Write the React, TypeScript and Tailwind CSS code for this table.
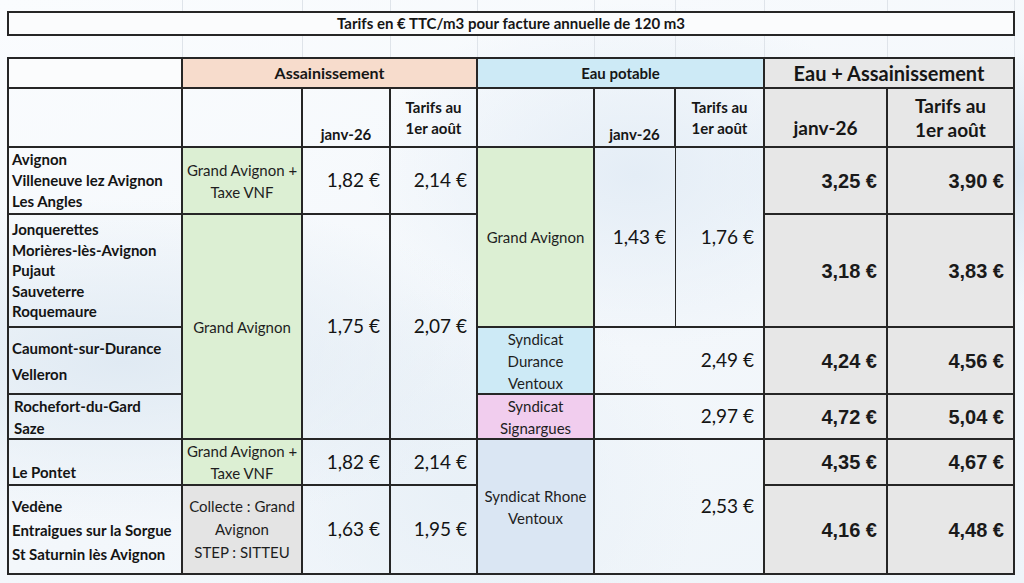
import React from "react";

const B = "border-r-2 border-b-2 border-[#262626]";

function C({ className = "", children }: { className?: string; children?: React.ReactNode }) {
  return <div className={`${B} flex ${className}`}>{children}</div>;
}

function Faint({ h }: { h: string }) {
  const cols = [0, 1, 2, 3, 4, 5, 6, 7, 8];
  return (
    <div className={`ml-[7px] w-[1008px] grid grid-cols-[176px_120px_88px_87px_117px_81px_89px_123px_127px] ${h}`}>
      {cols.map((i) => (
        <div key={i} className="border-r border-[#dfe4ea]" />
      ))}
    </div>
  );
}

const green = "bg-[#dcefd3]";
const val = "items-center justify-end pr-[9px] text-[19px] text-[#141414]";
const tot = "items-center justify-end pr-[9px] bg-[#e7e7e7] font-['Liberation_Sans',Arial,sans-serif] font-bold text-[20px] text-[#1a1a1a]";
const nameCell = "flex-col justify-center pl-[3px] font-bold text-[15px] text-[#141414]";
const org = "flex-col items-center justify-center text-center text-[15px] leading-[22px] text-[#1e1e1e]";

export default function App() {
  return (
    <div className="w-[1024px] h-[583px] overflow-hidden font-['Lato',sans-serif] bg-[radial-gradient(ellipse_at_12%_62%,#e0eaf3_0%,transparent_32%),radial-gradient(ellipse_at_62%_30%,#e4edf6_0%,transparent_30%),radial-gradient(ellipse_at_100%_30%,#d8e5f1_0%,transparent_22%),radial-gradient(ellipse_at_45%_85%,#e8f0f7_0%,transparent_30%),linear-gradient(160deg,#fafcfe_0%,#f3f7fb_60%,#eef4f9_100%)]">
      <Faint h="h-[11px]" />
      <div className="ml-[7px] w-[1008px] h-[25px] border-2 border-[#262626] bg-[#fbfcfd] flex items-center justify-center text-[15px] font-bold text-[#161616]">
        Tarifs en € TTC/m3 pour facture annuelle de 120 m3
      </div>
      <Faint h="h-[21px]" />
      <div className="ml-[7px] w-[1008px] border-l-2 border-t-2 border-[#262626] grid grid-cols-[174px_120px_88px_87px_117px_81px_89px_123px_127px] grid-rows-[30px_59px_67px_113px_67px_45px_46px_89px]">
        {/* Header row 1 */}
        <C className="bg-[#fbfcfd]" />
        <C className="col-span-3 bg-[#f7dccc] items-center justify-center font-bold text-[16px] text-[#161616]">Assainissement</C>
        <C className="col-span-3 bg-[#cdeaf6] items-center justify-center font-bold text-[15px] text-[#161616]">Eau potable</C>
        <C className="col-span-2 bg-[#e7e7e7] items-center justify-center font-bold text-[20px] text-[#161616]">Eau + Assainissement</C>

        {/* Header row 2 */}
        <C />
        <C />
        <C className="items-end justify-center pb-[1px] font-bold text-[15px] text-[#161616]">janv-26</C>
        <C className="flex-col items-center justify-center text-center font-bold text-[15px] leading-[21px] text-[#161616]">
          <span>Tarifs au</span>
          <span>1er août</span>
        </C>
        <C />
        <C className="items-end justify-center pb-[1px] font-bold text-[15px] text-[#161616]">janv-26</C>
        <C className="flex-col items-center justify-center text-center font-bold text-[15px] leading-[21px] text-[#161616]">
          <span>Tarifs au</span>
          <span>1er août</span>
        </C>
        <C className="bg-[#e7e7e7] items-end justify-center pb-[4px] font-bold text-[19px] text-[#161616]">janv-26</C>
        <C className="bg-[#e7e7e7] flex-col items-center justify-center text-center font-bold text-[19px] leading-[24px] text-[#161616]">
          <span>Tarifs au</span>
          <span>1er août</span>
        </C>

        {/* R1 */}
        <C className={`${nameCell} leading-[21px]`}>
          <span>Avignon</span>
          <span>Villeneuve lez Avignon</span>
          <span>Les Angles</span>
        </C>
        <C className={`${org} ${green}`}>
          <span>Grand Avignon +</span>
          <span>Taxe VNF</span>
        </C>
        <C className={val}>1,82 €</C>
        <C className={val}>2,14 €</C>
        <C className={`${org} ${green} row-span-2`}>Grand Avignon</C>
        <div className={`row-span-2 flex border-r border-b-2 border-[#262626] ${val}`}>1,43 €</div>
        <C className={`row-span-2 ${val}`}>1,76 €</C>
        <C className={tot}>3,25 €</C>
        <C className={tot}>3,90 €</C>

        {/* R2 */}
        <C className={`${nameCell} leading-[20.5px]`}>
          <span>Jonquerettes</span>
          <span>Morières-lès-Avignon</span>
          <span>Pujaut</span>
          <span>Sauveterre</span>
          <span>Roquemaure</span>
        </C>
        <C className={`${org} ${green} row-span-3`}>Grand Avignon</C>
        <C className={`row-span-3 ${val}`}>1,75 €</C>
        <C className={`row-span-3 ${val}`}>2,07 €</C>
        <C className={tot}>3,18 €</C>
        <C className={tot}>3,83 €</C>

        {/* R3 */}
        <C className={`${nameCell} leading-[26px]`}>
          <span>Caumont-sur-Durance</span>
          <span>Velleron</span>
        </C>
        <C className={`${org} bg-[#cdeaf6] leading-[21.5px]`}>
          <span>Syndicat</span>
          <span>Durance</span>
          <span>Ventoux</span>
        </C>
        <C className={`col-span-2 ${val}`}>2,49 €</C>
        <C className={tot}>4,24 €</C>
        <C className={tot}>4,56 €</C>

        {/* R4 */}
        <C className={`${nameCell} leading-[22px] pl-[5px]`}>
          <span>Rochefort-du-Gard</span>
          <span>Saze</span>
        </C>
        <C className={`${org} bg-[#f1cdee]`}>
          <span>Syndicat</span>
          <span>Signargues</span>
        </C>
        <C className={`col-span-2 ${val}`}>2,97 €</C>
        <C className={tot}>4,72 €</C>
        <C className={tot}>5,04 €</C>

        {/* R5 */}
        <div className={`${B} flex flex-col justify-end pb-[1px] pl-[3px] font-bold text-[15px] leading-[22px] text-[#141414]`}>
          <span>Le Pontet</span>
        </div>
        <C className={`${org} ${green}`}>
          <span>Grand Avignon +</span>
          <span>Taxe VNF</span>
        </C>
        <C className={val}>1,82 €</C>
        <C className={val}>2,14 €</C>
        <C className={`${org} bg-[#dae6f3] row-span-2`}>
          <span>Syndicat Rhone</span>
          <span>Ventoux</span>
        </C>
        <C className={`col-span-2 row-span-2 ${val}`}>2,53 €</C>
        <C className={tot}>4,35 €</C>
        <C className={tot}>4,67 €</C>

        {/* R6 */}
        <C className={`${nameCell} leading-[24px]`}>
          <span>Vedène</span>
          <span>Entraigues sur la Sorgue</span>
          <span>St Saturnin lès Avignon</span>
        </C>
        <C className={`${org} bg-[#e4e4e4] leading-[23px]`}>
          <span>Collecte : Grand</span>
          <span>Avignon</span>
          <span>STEP : SITTEU</span>
        </C>
        <C className={val}>1,63 €</C>
        <C className={val}>1,95 €</C>
        <C className={tot}>4,16 €</C>
        <C className={tot}>4,48 €</C>
      </div>
    </div>
  );
}
